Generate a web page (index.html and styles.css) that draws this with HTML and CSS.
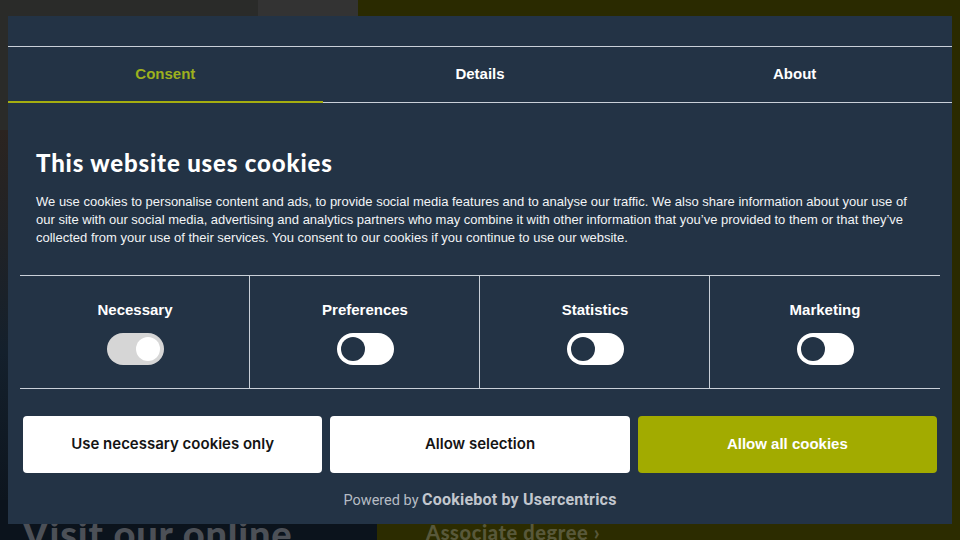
FILE: index.html
```html
<!DOCTYPE html>
<html lang="en">
<head>
<meta charset="utf-8">
<title>Cookie consent</title>
<link rel="stylesheet" href="styles.css">
</head>
<body>
<div class="page">
  <div class="row row-top">
    <div class="blk blk-dark"></div>
    <div class="blk blk-gray"></div>
    <div class="blk blk-olive"></div>
  </div>
  <div class="row row-mid">
    <div class="blk blk-photo"></div>
    <div class="blk blk-olive2"></div>
  </div>
  <div class="row row-bottom">
    <div class="blk blk-navy"><span class="visit">Visit our online</span></div>
    <div class="blk blk-olive3"><span class="assoc">Associate degree ›</span></div>
  </div>
</div>

<div class="dialog">
  <div class="dlg-header"></div>
  <nav class="tabs">
    <div class="tab active">Consent</div>
    <div class="tab">Details</div>
    <div class="tab">About</div>
  </nav>
  <div class="content">
    <h1 class="title">This website uses cookies</h1>
    <p class="desc">We use cookies to personalise content and ads, to provide social media features and to analyse our traffic. We also share information about your use of our site with our social media, advertising and analytics partners who may combine it with other information that you’ve provided to them or that they’ve collected from your use of their services. You consent to our cookies if you continue to use our website.</p>
  </div>
  <div class="cats">
    <div class="cat"><div class="cat-label">Necessary</div><span class="toggle on disabled"><span class="knob"></span></span></div>
    <div class="cat"><div class="cat-label">Preferences</div><span class="toggle"><span class="knob"></span></span></div>
    <div class="cat"><div class="cat-label">Statistics</div><span class="toggle"><span class="knob"></span></span></div>
    <div class="cat"><div class="cat-label">Marketing</div><span class="toggle"><span class="knob"></span></span></div>
  </div>
  <div class="buttons">
    <button class="btn">Use necessary cookies only</button>
    <button class="btn">Allow selection</button>
    <button class="btn btn-primary">Allow all cookies</button>
  </div>
  <div class="powered">Powered by <strong>Cookiebot by Usercentrics</strong></div>
</div>
</body>
</html>
```
FILE: styles.css
```css
* { box-sizing: border-box; }
html, body { margin: 0; padding: 0; }
body {
  width: 960px;
  height: 540px;
  overflow: hidden;
  position: relative;
  font-family: "Liberation Sans", Arial, sans-serif;
  background: #1c1c1c;
}

/* dimmed page behind the dialog */
.page {
  display: flex;
  flex-direction: column;
  height: 540px;
}
.row { display: flex; }
.row-top { height: 130px; }
.row-mid { flex: 1; }
.row-bottom { height: 40px; }
.blk-dark { width: 258px; background: #2a2b29; }
.blk-gray { width: 100px; background: #333333; }
.blk-olive { flex: 1; background: #2a2a00; }
.blk-photo { width: 358px; background: linear-gradient(180deg, #2b2420 0%, #14202c 60%, #0d151e 100%); }
.blk-olive2 { flex: 1; background: #2a2a00; }
.blk-navy { width: 377px; background: #0b131c; position: relative; overflow: hidden; }
.blk-olive3 { flex: 1; background: #2c2c00; position: relative; overflow: hidden; }
.visit {
  position: absolute;
  left: 22px;
  top: 10px;
  font-family: "Lato", sans-serif;
  font-weight: 900;
  font-size: 38px;
  letter-spacing: 0.8px;
  color: #4c5057;
  white-space: nowrap;
}
.assoc {
  position: absolute;
  left: 49px;
  top: 20px;
  font-family: "Lato", sans-serif;
  font-weight: 900;
  font-size: 20px;
  letter-spacing: 0.6px;
  color: #58583a;
  white-space: nowrap;
}

/* dialog */
.dialog {
  position: absolute;
  left: 8px;
  top: 16px;
  width: 944px;
  height: 508px;
  background: #233345;
  display: flex;
  flex-direction: column;
  color: #ffffff;
}
.dlg-header { height: 30px; }
.tabs {
  display: grid;
  grid-template-columns: repeat(3, 1fr);
  border-top: 1px solid #c9d0d8;
  border-bottom: 1px solid #c9d0d8;
  height: 57px;
}
.tab {
  display: flex;
  align-items: center;
  justify-content: center;
  font-weight: 700;
  font-size: 15px;
  color: #ffffff;
  padding-bottom: 3px;
}
.tab.active {
  color: #9db01e;
  box-shadow: inset 0 -2px 0 #a4ae10;
  margin-bottom: -1px;
  padding-bottom: 4px;
}

.content { padding: 46px 28px 0; }
.title {
  margin: 0;
  font-family: "Lato", sans-serif;
  font-weight: 900;
  font-size: 24px;
  line-height: 28px;
  color: #ffffff;
  letter-spacing: 0.85px;
}
.desc {
  margin: 16px 0 0;
  font-size: 13px;
  line-height: 18px;
  color: #f2f4f6;
}

.cats {
  margin: 28px 12px 0;
  display: grid;
  grid-template-columns: repeat(4, 1fr);
  border-top: 1px solid #c9d0d8;
  border-bottom: 1px solid #c9d0d8;
}
.cat {
  display: flex;
  flex-direction: column;
  align-items: center;
  gap: 13px;
  padding: 24px 0 23px;
}
.cat + .cat { border-left: 1px solid #c9d0d8; margin-left: -1px; }
.cat-label {
  font-weight: 700;
  font-size: 15px;
  line-height: 20px;
}
.toggle {
  display: flex;
  align-items: center;
  width: 57px;
  height: 32px;
  border-radius: 16px;
  background: #ffffff;
  padding: 0 4px;
}
.knob {
  width: 24px;
  height: 24px;
  border-radius: 50%;
  background: #233345;
}
.toggle.on { background: #d6d6d6; justify-content: flex-end; }
.toggle.on .knob { background: #ffffff; }

.buttons {
  display: flex;
  gap: 8px;
  padding: 27px 15px 0 15px;
}
.btn {
  flex: 1;
  height: 57px;
  border: 0;
  border-radius: 4px;
  background: #ffffff;
  color: #141414;
  font-family: "Inter", "Liberation Sans", sans-serif;
  font-weight: 600;
  font-size: 15px;
  padding: 0 0 2px;
}
.btn-primary {
  background: #a2ab00;
  color: #ffffff;
  font-family: "Liberation Sans", Arial, sans-serif;
  font-weight: 700;
}

.powered {
  text-align: center;
  margin-top: 17px;
  font-family: "Roboto", "Liberation Sans", sans-serif;
  font-size: 14.5px;
  color: #b6bcc4;
}
.powered strong {
  font-weight: 700;
  font-size: 16px;
  letter-spacing: 0.2px;
  color: #c2c7ce;
}
```
